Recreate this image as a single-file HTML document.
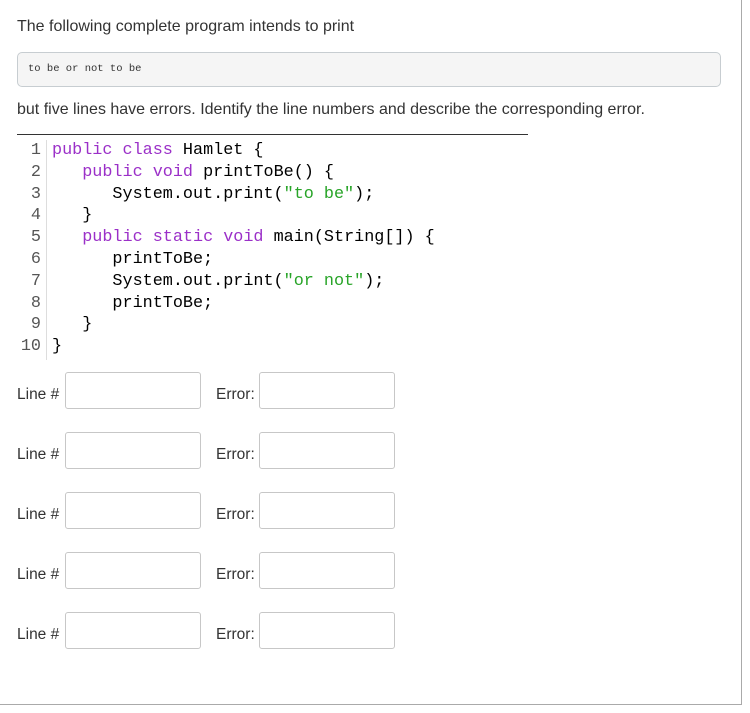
<!DOCTYPE html>
<html><head><style>
body{margin:0;background:#fff;width:750px;height:713px;overflow:hidden;font-family:"Liberation Sans",sans-serif;color:#333;}
.wrap{position:absolute;left:0;top:0;width:741px;height:704px;border-right:1px solid #aaa;border-bottom:1px solid #aaa;}
.t{position:absolute;left:17px;font-size:16px;letter-spacing:0;}
.pre{position:absolute;left:17px;top:52px;width:702px;height:33px;background:#f5f5f5;border:1px solid #c7cdd1;border-radius:5px;}
.pre span{position:absolute;left:10px;top:10px;font-family:"Liberation Mono",monospace;font-size:10.5px;color:#333;}
.hr{position:absolute;left:17px;top:134px;width:511px;height:1px;background:#333;}
.gut{position:absolute;left:17px;top:140px;width:29px;height:220px;border-right:1px solid #ddd;}
.code{position:absolute;top:140px;font-family:"Liberation Mono",monospace;font-size:16.8px;line-height:21.8px;white-space:pre;color:#000;}
.num{left:17px;width:24px;text-align:right;color:#555;}
.src{left:52px;}
.k{color:#9b30c8}
.s{color:#28a428}
.lab{position:absolute;font-size:15.5px;color:#333;}
.box{position:absolute;width:134px;height:35px;border:1px solid #c7c7c7;border-radius:3px;background:#fff;}
</style></head><body>
<div class="wrap"></div>
<div class="t" style="top:18px">The following complete program intends to print</div>
<div class="pre"><span>to be or not to be</span></div>
<div class="t" style="top:101px">but five lines have errors. Identify the line numbers and describe the corresponding error.</div>
<div class="hr"></div>
<div class="gut"></div>
<div class="code num">1
2
3
4
5
6
7
8
9
10</div>
<div class="code src"><span class="k">public class</span> Hamlet {
   <span class="k">public void</span> printToBe() {
      System.out.print(<span class="s">"to be"</span>);
   }
   <span class="k">public static void</span> main(String[]) {
      printToBe;
      System.out.print(<span class="s">"or not"</span>);
      printToBe;
   }
}</div>

<div class="lab" style="left:17px;top:386px">Line #</div><div class="box" style="left:65px;top:372px"></div>
<div class="lab" style="left:216px;top:386px">Error:</div><div class="box" style="left:259px;top:372px"></div>
<div class="lab" style="left:17px;top:446px">Line #</div><div class="box" style="left:65px;top:432px"></div>
<div class="lab" style="left:216px;top:446px">Error:</div><div class="box" style="left:259px;top:432px"></div>
<div class="lab" style="left:17px;top:506px">Line #</div><div class="box" style="left:65px;top:492px"></div>
<div class="lab" style="left:216px;top:506px">Error:</div><div class="box" style="left:259px;top:492px"></div>
<div class="lab" style="left:17px;top:566px">Line #</div><div class="box" style="left:65px;top:552px"></div>
<div class="lab" style="left:216px;top:566px">Error:</div><div class="box" style="left:259px;top:552px"></div>
<div class="lab" style="left:17px;top:626px">Line #</div><div class="box" style="left:65px;top:612px"></div>
<div class="lab" style="left:216px;top:626px">Error:</div><div class="box" style="left:259px;top:612px"></div>
</body></html>
